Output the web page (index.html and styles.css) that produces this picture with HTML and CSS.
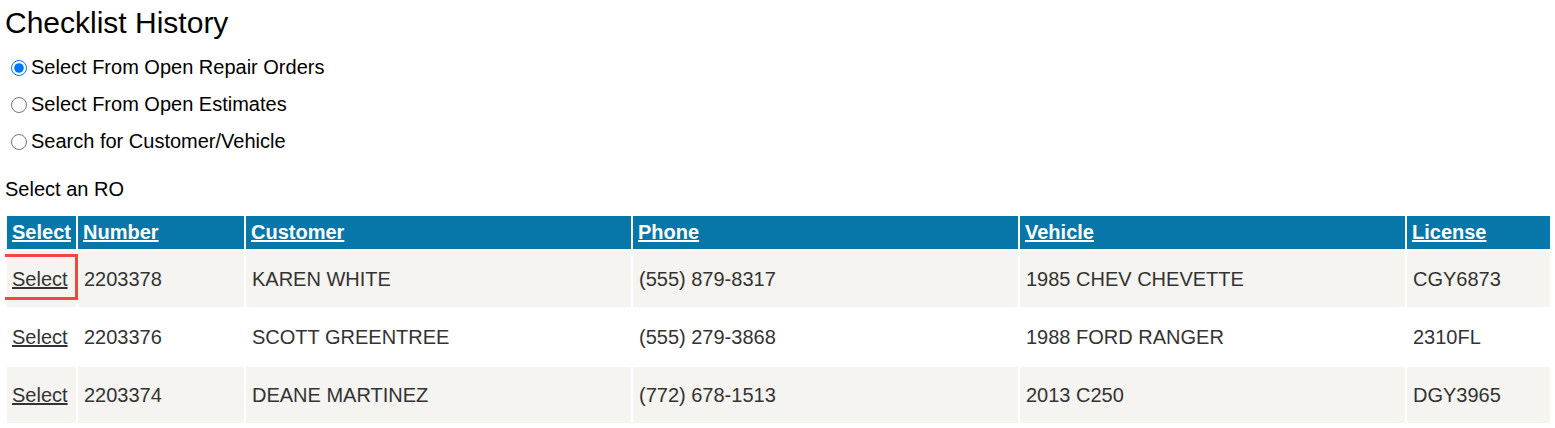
FILE: index.html
```html
<!DOCTYPE html>
<html lang="en">
<head>
<meta charset="utf-8">
<title>Checklist History</title>
<link rel="stylesheet" href="styles.css">
</head>
<body>
<h1 class="title">Checklist History</h1>
<div class="options">
  <label class="option"><input type="radio" name="src" checked>Select From Open Repair Orders</label>
  <label class="option"><input type="radio" name="src">Select From Open Estimates</label>
  <label class="option"><input type="radio" name="src">Search for Customer/Vehicle</label>
</div>
<p class="caption">Select an RO</p>
<div class="table-wrap">
<table class="grid">
  <thead>
    <tr>
      <th class="c-select"><a href="#">Select</a></th>
      <th class="c-number"><a href="#">Number</a></th>
      <th class="c-wide"><a href="#">Customer</a></th>
      <th class="c-wide"><a href="#">Phone</a></th>
      <th class="c-wide"><a href="#">Vehicle</a></th>
      <th class="c-license"><a href="#">License</a></th>
    </tr>
  </thead>
  <tbody>
    <tr class="alt">
      <td class="sel-cell"><a href="#">Select</a><span class="highlight"></span></td>
      <td>2203378</td>
      <td>KAREN WHITE</td>
      <td>(555) 879-8317</td>
      <td>1985 CHEV CHEVETTE</td>
      <td>CGY6873</td>
    </tr>
    <tr>
      <td><a href="#">Select</a></td>
      <td>2203376</td>
      <td>SCOTT GREENTREE</td>
      <td>(555) 279-3868</td>
      <td>1988 FORD RANGER</td>
      <td>2310FL</td>
    </tr>
    <tr class="alt">
      <td><a href="#">Select</a></td>
      <td>2203374</td>
      <td>DEANE MARTINEZ</td>
      <td>(772) 678-1513</td>
      <td>2013 C250</td>
      <td>DGY3965</td>
    </tr>
  </tbody>
</table>
</div>
</body>
</html>
```
FILE: styles.css
```css
body {
  margin: 5px;
  font-family: "Liberation Sans", Arial, sans-serif;
  font-size: 20px;
  color: #000;
  background: #fff;
  overflow: hidden;
}
.title {
  margin: 0;
  font-size: 30px;
  font-weight: normal;
  line-height: 35px;
}
.options {
  margin-top: 16px;
  display: flex;
  flex-direction: column;
  gap: 14px;
}
.option {
  display: flex;
  align-items: center;
  line-height: 23px;
  height: 23px;
}
.option input {
  width: 16px;
  height: 16px;
  margin: 0 4px 0 6px;
  accent-color: #0075ff;
}
.caption {
  margin: 25px 0 0;
  line-height: 23px;
}
.table-wrap {
  margin: 13px -5px 0 0;
  overflow: hidden;
}
.grid {
  border-collapse: separate;
  border-spacing: 2px;
  table-layout: fixed;
  width: 1620px;
  min-width: 1620px;
  color: #333;
}
.grid th,
.grid td {
  box-sizing: border-box;
  text-align: left;
  line-height: 23px;
  white-space: nowrap;
}
.grid th {
  background: #0677a8;
  color: #fff;
  font-weight: bold;
  height: 33px;
  padding: 5px 5px;
}
.grid th a {
  color: #fff;
}
.grid td {
  height: 56px;
  padding: 0 5px 0 6px;
}
.grid td:first-child {
  padding-left: 5px;
}
.grid td a {
  color: #333;
}
.grid tr.alt td {
  background: #f5f4f0;
}
.c-select { width: 69px; }
.c-number { width: 166px; }
.c-wide { width: 385px; }
.c-license { width: 216px; }
.sel-cell {
  position: relative;
}
.highlight {
  position: absolute;
  left: -5px;
  top: 3px;
  width: 76px;
  height: 46px;
  box-sizing: border-box;
  border: 3px solid #f44444;
  pointer-events: none;
}
```
